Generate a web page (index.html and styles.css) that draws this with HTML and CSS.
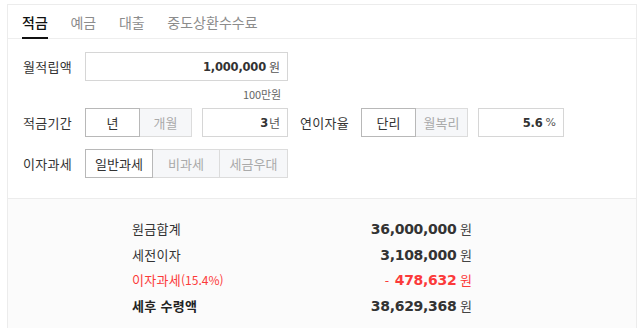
FILE: index.html
```html
<!DOCTYPE html>
<html lang="ko">
<head>
<meta charset="utf-8">
<title>적금 계산기</title>
<link rel="stylesheet" href="styles.css">
</head>
<body>
<div class="calc">
  <div class="tabs">
    <span class="tab active">적금</span>
    <span class="tab">예금</span>
    <span class="tab">대출</span>
    <span class="tab">중도상환수수료</span>
  </div>
  <div class="form">
    <div class="row">
      <span class="label">월적립액</span>
      <div class="field wide"><b class="num">1,000,000</b><span class="unit">원</span></div>
    </div>
    <div class="note">100만원</div>
    <div class="row">
      <span class="label">적금기간</span>
      <div class="group">
        <span class="opt on w55">년</span><span class="opt w53">개월</span>
      </div>
      <div class="field short"><b class="num">3</b><span class="unit tight">년</span></div>
      <span class="label mid">연이자율</span>
      <div class="group">
        <span class="opt on w55">단리</span><span class="opt w53">월복리</span>
      </div>
      <div class="field short rate"><b class="num">5.6</b><span class="unit pct">%</span></div>
    </div>
    <div class="row gap">
      <span class="label">이자과세</span>
      <div class="group">
        <span class="opt on w68">일반과세</span><span class="opt w68">비과세</span><span class="opt w69">세금우대</span>
      </div>
    </div>
  </div>
  <div class="result">
    <div class="res-row"><span class="res-label">원금합계</span><span class="res-val"><b class="big">36,000,000</b> 원</span></div>
    <div class="res-row"><span class="res-label">세전이자</span><span class="res-val"><b class="big">3,108,000</b> 원</span></div>
    <div class="res-row red"><span class="res-label">이자과세<small>(15.4%)</small></span><span class="res-val"><b class="minus">-</b> <b class="big">478,632</b> 원</span></div>
    <div class="res-row"><span class="res-label strong">세후 수령액</span><span class="res-val"><b class="big">38,629,368</b> 원</span></div>
  </div>
</div>
</body>
</html>
```
FILE: styles.css
```css
html, body {
  margin: 0;
  padding: 0;
  background: #fff;
}
body {
  font-family: "Noto Sans CJK KR", "Noto Sans", sans-serif;
  font-size: 13px;
  color: #333;
  height: 328px;
  overflow: hidden;
}
.calc {
  margin: 4px 0 0 7px;
  width: 630px;
  box-sizing: border-box;
  border: 1px solid #ececec;
  border-bottom: none;
  height: 330px;
  display: flex;
  flex-direction: column;
}
.tabs {
  display: flex;
  height: 33px;
  padding-left: 14px;
  gap: 22.7px;
  border-bottom: 1px solid #eeeeee;
}
.tab {
  box-sizing: border-box;
  height: 34px;
  padding-top: 3px;
  line-height: 29px;
  border-bottom: 2px solid transparent;
  color: #8c8c8c;
  font-size: 14px;
}
.tab.active {
  color: #111;
  font-weight: 500;
  border-bottom-color: #111;
}
.form {
  padding: 13px 0 20px 15px;
}
.row {
  display: flex;
  align-items: center;
  height: 29px;
}
.row.gap {
  margin-top: 12px;
}
.label {
  width: 62px;
  color: #333;
  font-size: 13px;
  letter-spacing: 0.3px;
}
.label.mid {
  margin-left: 12px;
  width: 61px;
}
.field {
  box-sizing: border-box;
  height: 29px;
  border: 1px solid #d6d6d6;
  background: #fff;
  display: flex;
  align-items: center;
  justify-content: flex-end;
  padding-right: 7px;
}
.field.wide {
  width: 203px;
}
.field.short {
  width: 86px;
  margin-left: 10px;
}
.num {
  font-family: "DejaVu Sans", sans-serif;
  font-weight: bold;
  font-size: 11.5px;
  letter-spacing: -0.2px;
  color: #333;
}
.unit {
  margin-left: 3px;
  font-size: 12px;
  color: #555;
}
.unit.tight {
  margin-left: 1px;
}
.unit.pct {
  font-family: "DejaVu Sans", sans-serif;
  font-size: 11px;
}
.note {
  margin: 6px 0 7px 62px;
  width: 203px;
  box-sizing: border-box;
  padding-right: 7px;
  text-align: right;
  font-size: 11px;
  line-height: 14px;
  color: #666;
  letter-spacing: -0.1px;
}
.group {
  display: flex;
}
.opt {
  box-sizing: border-box;
  height: 29px;
  line-height: 27px;
  text-align: center;
  border: 1px solid #dcdcdc;
  background: #f6f7f9;
  color: #aaaaaa;
  font-size: 13px;
  margin-left: -1px;
}
.opt:first-child {
  margin-left: 0;
}
.opt.on {
  background: #fff;
  color: #333;
  border-color: #b8b8b8;
  position: relative;
  z-index: 1;
}
.w55 { width: 55px; }
.w53 { width: 53px; }
.w68 { width: 68px; }
.w69 { width: 69px; }
.result {
  flex: 1;
  border-top: 1px solid #ececec;
  background: #fbfbfb;
  padding: 17px 0 0 124px;
}
.res-row {
  width: 340px;
  display: flex;
  justify-content: space-between;
  align-items: center;
  height: 25.5px;
  color: #333;
}
.res-label {
  font-size: 13px;
  letter-spacing: 0.3px;
}
.res-label.strong {
  font-weight: bold;
  color: #222;
}
.res-label small {
  font-size: 12px;
  letter-spacing: 0;
}
.res-val {
  font-size: 13px;
  color: #444;
}
.big {
  font-family: "DejaVu Sans", sans-serif;
  font-weight: bold;
  font-size: 14px;
  letter-spacing: -0.3px;
  color: #333;
}
.res-row.red,
.res-row.red .res-val,
.res-row.red .big {
  color: #fb3a3a;
}
.minus {
  font-family: "DejaVu Sans", sans-serif;
  font-weight: normal;
  font-size: 12px;
  margin-right: 2px;
}
```
